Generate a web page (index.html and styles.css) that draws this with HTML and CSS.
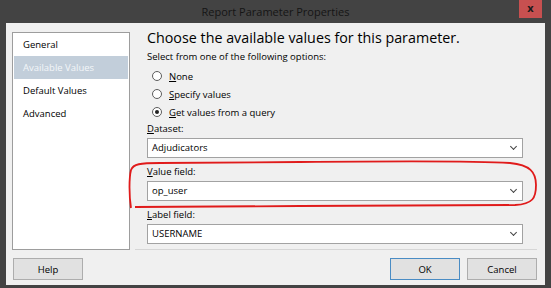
FILE: index.html
```html
<!DOCTYPE html>
<html lang="en">
<head>
    <meta charset="UTF-8">
    <meta name="viewport" content="width=device-width, initial-scale=1.0">
    <title>Report Parameter Properties</title>
    <link rel="stylesheet" href="styles.css">
</head>
<body>
    <div class="window">
        <div class="titlebar">
            <span class="title">Report Parameter Properties</span>
            <div class="close">x</div>
        </div>
        <div class="client">
            <div class="main">
                <ul class="nav">
                    <li>General</li>
                    <li class="active">Available Values</li>
                    <li>Default Values</li>
                    <li>Advanced</li>
                </ul>
                <div class="panel">
                    <h1>Choose the available values for this parameter.</h1>
                    <p class="hint">Select from one of the following options:</p>
                    <div class="options">
                        <div class="option"><span class="radio"></span><span><u>N</u>one</span></div>
                        <div class="option"><span class="radio"></span><span><u>S</u>pecify values</span></div>
                        <div class="option"><span class="radio checked"></span><span><u>G</u>et values from a query</span></div>
                    </div>
                    <div class="field first">
                        <div class="field-label"><u>D</u>ataset:</div>
                        <div class="select">Adjudicators<span class="chevron"></span></div>
                    </div>
                    <div class="field">
                        <div class="field-label"><u>V</u>alue field:</div>
                        <div class="select">op_user<span class="chevron"></span></div>
                    </div>
                    <div class="field">
                        <div class="field-label"><u>L</u>abel field:</div>
                        <div class="select">USERNAME<span class="chevron"></span></div>
                    </div>
                </div>
            </div>
            <div class="footer">
                <button class="btn">Help</button>
                <div class="spacer"></div>
                <button class="btn default">OK</button>
                <button class="btn">Cancel</button>
            </div>
        </div>
        <!-- red marker drawn over the screenshot -->
        <svg class="marker" width="551" height="288" viewBox="0 0 551 288">
            <path d="M131 208 C129 195 129 178 131 170 C133 164 140 163 160 163 L300 162 C400 161 480 161 510 163 C530 165 536 172 536 185 C536 198 533 204 515 205 L300 206 L135 207" fill="none" stroke="#e01b1b" stroke-width="1.8"/>
        </svg>
    </div>
</body>
</html>
```

FILE: styles.css
```css
body {
    margin: 0;
    font-family: 'Open Sans', sans-serif;
    font-size: 9.5px;
    color: #000;
    background-color: #434343;
}
.window {
    position: relative;
    width: 551px;
    height: 288px;
    background-color: #434343;
}
.titlebar {
    height: 23px;
    display: flex;
    justify-content: center;
    align-items: center;
}
.title {
    font-size: 11px;
    color: #151515;
}
.close {
    position: absolute;
    top: 0;
    left: 519px;
    width: 23px;
    height: 18px;
    background-color: #c75050;
    color: #1a1a1a;
    font-weight: bold;
    font-size: 11px;
    line-height: 16px;
    text-align: center;
}
.client {
    margin: 0 6px;
    height: 262px;
    box-sizing: border-box;
    padding: 9px 8px 5px 6px;
    background-color: #f0f0f0;
}
.main {
    display: flex;
    height: 218px;
}
.nav {
    list-style: none;
    margin: 0;
    padding: 0 1px;
    width: 118px;
    box-sizing: border-box;
    background-color: #fff;
    border: 1px solid #9d9d9d;
}
.nav li {
    height: 23px;
    line-height: 23px;
    padding-left: 9px;
}
.nav li.active {
    background-color: #c2ceda;
    color: #f3f6f9;
}
.panel {
    flex: 1;
    margin-left: 5px;
    padding: 0 14px 0 12px;
    border-bottom: 1px solid #d6d6d6;
}
h1 {
    margin: -2px 0 0;
    font-size: 14.3px;
    font-weight: normal;
    line-height: 16px;
}
.hint {
    margin: 4px 0 0;
    line-height: 13px;
}
.options {
    margin-top: 4px;
    padding-left: 5px;
}
.option {
    display: flex;
    align-items: center;
    gap: 7px;
    height: 18px;
}
.radio {
    width: 10px;
    height: 10px;
    box-sizing: border-box;
    border: 1px solid #5c5c5c;
    border-radius: 50%;
    background-color: #fff;
    display: flex;
    justify-content: center;
    align-items: center;
}
.radio.checked::after {
    content: '';
    width: 4px;
    height: 4px;
    border-radius: 50%;
    background-color: #222;
}
.field {
    margin-top: 8px;
}
.field.first {
    margin-top: 2px;
}
.field-label {
    line-height: 12px;
    margin-bottom: 3px;
}
.select {
    position: relative;
    height: 20px;
    box-sizing: border-box;
    border: 1px solid #a2a2a2;
    background-color: #fff;
    padding-left: 4px;
    line-height: 18px;
}
.chevron {
    position: absolute;
    right: 6px;
    top: 5px;
    width: 4px;
    height: 4px;
    border-right: 1px solid #444;
    border-bottom: 1px solid #444;
    transform: rotate(45deg);
}
.footer {
    display: flex;
    gap: 7px;
    margin: 8px 0 0 1px;
}
.spacer {
    flex: 1;
}
.btn {
    width: 70px;
    height: 22px;
    padding: 0;
    font-family: inherit;
    font-size: 9.5px;
    color: #000;
    background-color: #e1e1e1;
    border: 1px solid #adadad;
}
.btn.default {
    border-color: #4a8cc4;
}
.marker {
    position: absolute;
    left: 0;
    top: 0;
    pointer-events: none;
}
```
